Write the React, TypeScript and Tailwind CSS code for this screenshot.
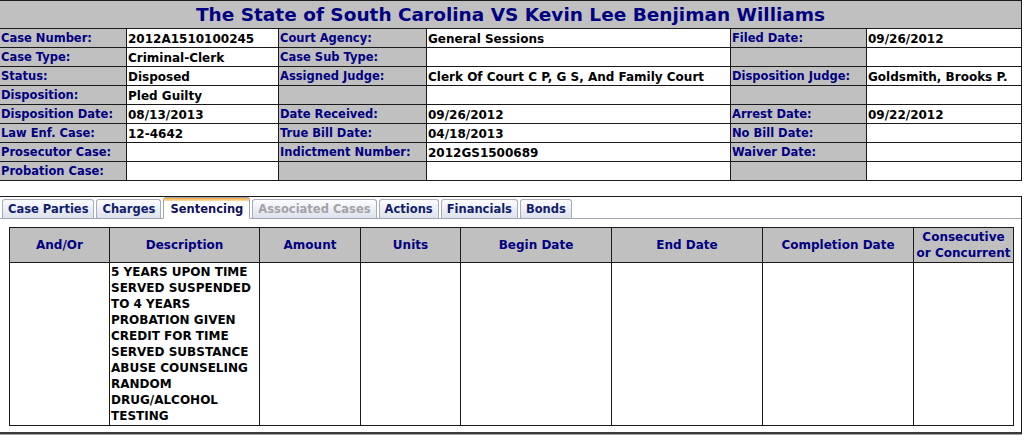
import React from "react";

const L = "bg-[#c0c0c0] text-[#000080] text-[11.5px] font-bold pl-[1px] pt-px flex items-center whitespace-nowrap overflow-hidden leading-none";
const V = "bg-white text-black text-[12px] font-bold pl-[1px] pt-px flex items-center whitespace-nowrap overflow-hidden leading-none";

type Row = [string, string, string, string, string, string];

const rows: Row[] = [
  ["Case Number:", "2012A1510100245", "Court Agency:", "General Sessions", "Filed Date:", "09/26/2012"],
  ["Case Type:", "Criminal-Clerk", "Case Sub Type:", "", "", ""],
  ["Status:", "Disposed", "Assigned Judge:", "Clerk Of Court C P, G S, And Family Court", "Disposition Judge:", "Goldsmith, Brooks P."],
  ["Disposition:", "Pled Guilty", "", "", "", ""],
  ["Disposition Date:", "08/13/2013", "Date Received:", "09/26/2012", "Arrest Date:", "09/22/2012"],
  ["Law Enf. Case:", "12-4642", "True Bill Date:", "04/18/2013", "No Bill Date:", ""],
  ["Prosecutor Case:", "", "Indictment Number:", "2012GS1500689", "Waiver Date:", ""],
  ["Probation Case:", "", "", "", "", ""],
];

const tabs = [
  { t: "Case Parties" },
  { t: "Charges" },
  { t: "Sentencing", sel: true },
  { t: "Associated Cases", dis: true },
  { t: "Actions" },
  { t: "Financials" },
  { t: "Bonds" },
];

const heads = ["And/Or", "Description", "Amount", "Units", "Begin Date", "End Date", "Completion Date"];

const desc = [
  "5 YEARS UPON TIME",
  "SERVED SUSPENDED",
  "TO 4 YEARS",
  "PROBATION GIVEN",
  "CREDIT FOR TIME",
  "SERVED SUBSTANCE",
  "ABUSE COUNSELING",
  "RANDOM",
  "DRUG/ALCOHOL",
  "TESTING",
];

export default function App() {
  return (
    <div className="w-[1024px] h-[441px] bg-white overflow-hidden font-['DejaVu_Sans',sans-serif]">
      {/* Case header table */}
      <div className="w-[1022px] bg-[#1a1a1a] pt-px pr-px pb-px grid grid-cols-[126px_151px_147px_303px_135px_154px] grid-rows-[27px_repeat(8,18px)] gap-px">
        <div className="col-span-6 bg-[#c0c0c0] flex items-center justify-center pt-px text-[#000080] font-bold text-[18.5px] leading-none whitespace-nowrap">
          The State of South Carolina VS Kevin Lee Benjiman Williams
        </div>
        {rows.map((r, i) => (
          <React.Fragment key={i}>
            <div className={L}>{r[0]}</div>
            <div className={V}>{r[1]}</div>
            <div className={L}>{r[2]}</div>
            <div className={V}>{r[3]}</div>
            <div className={L}>{r[4]}</div>
            <div className={V}>{r[5]}</div>
          </React.Fragment>
        ))}
      </div>

      {/* Tab panel */}
      <div className="mt-[15px] w-[1022px] border-t border-r border-b-2 border-t-[#1a1a1a] border-r-[#1a1a1a] border-b-[#3a3a3a] shadow-[0_1px_0_#a0a0a0] pb-[6px]">
        <div className="flex items-end gap-[2px] pl-[2px] pt-[2px] h-[22px] border-b border-[#a0a4b0]">
          {tabs.map((tb) =>
            tb.sel ? (
              <div
                key={tb.t}
                className="relative -mb-px h-[22px] px-[6px] bg-white border border-[#a0a4b0] border-b-white rounded-t-[3px] flex items-center text-[11.5px] font-bold text-[#10105a] leading-none"
              >
                <span className="absolute left-0 right-0 top-0 h-[3px] rounded-t-[2px] bg-gradient-to-b from-[#f4a52a] to-[#fbe0a8]" />
                <span className="pt-[3px]">{tb.t}</span>
              </div>
            ) : (
              <div
                key={tb.t}
                className={`h-[19px] px-[5px] pt-px border border-b-0 border-[#a8acb8] rounded-t-[3px] bg-gradient-to-b from-[#fbfcfe] to-[#dde2ec] flex items-center text-[11.5px] font-bold leading-none ${
                  tb.dis ? "text-[#a3a3a8]" : "text-[#10206a]"
                }`}
              >
                {tb.t}
              </div>
            )
          )}
        </div>

        <div className="pl-[9px] pt-[8px]">
          <div className="w-[1005px] bg-[#1a1a1a] p-px grid grid-cols-[99px_149px_100px_99px_150px_150px_150px_99px] grid-rows-[34px_162px] gap-px">
            {heads.map((h) => (
              <div key={h} className="bg-[#c0c0c0] flex items-center justify-center text-[#000080] text-[12px] font-bold leading-none whitespace-nowrap">
                {h}
              </div>
            ))}
            <div className="bg-[#c0c0c0] flex flex-col items-center justify-center text-[#000080] text-[12px] font-bold leading-[16px] whitespace-nowrap">
              <span>Consecutive</span>
              <span>or Concurrent</span>
            </div>
            <div className="bg-white" />
            <div className="bg-white pl-px pt-px text-[12px] font-bold text-black leading-[16px] flex flex-col">
              {desc.map((d) => (
                <span key={d} className="whitespace-nowrap">{d}</span>
              ))}
            </div>
            <div className="bg-white" />
            <div className="bg-white" />
            <div className="bg-white" />
            <div className="bg-white" />
            <div className="bg-white" />
            <div className="bg-white" />
          </div>
        </div>
      </div>
    </div>
  );
}
